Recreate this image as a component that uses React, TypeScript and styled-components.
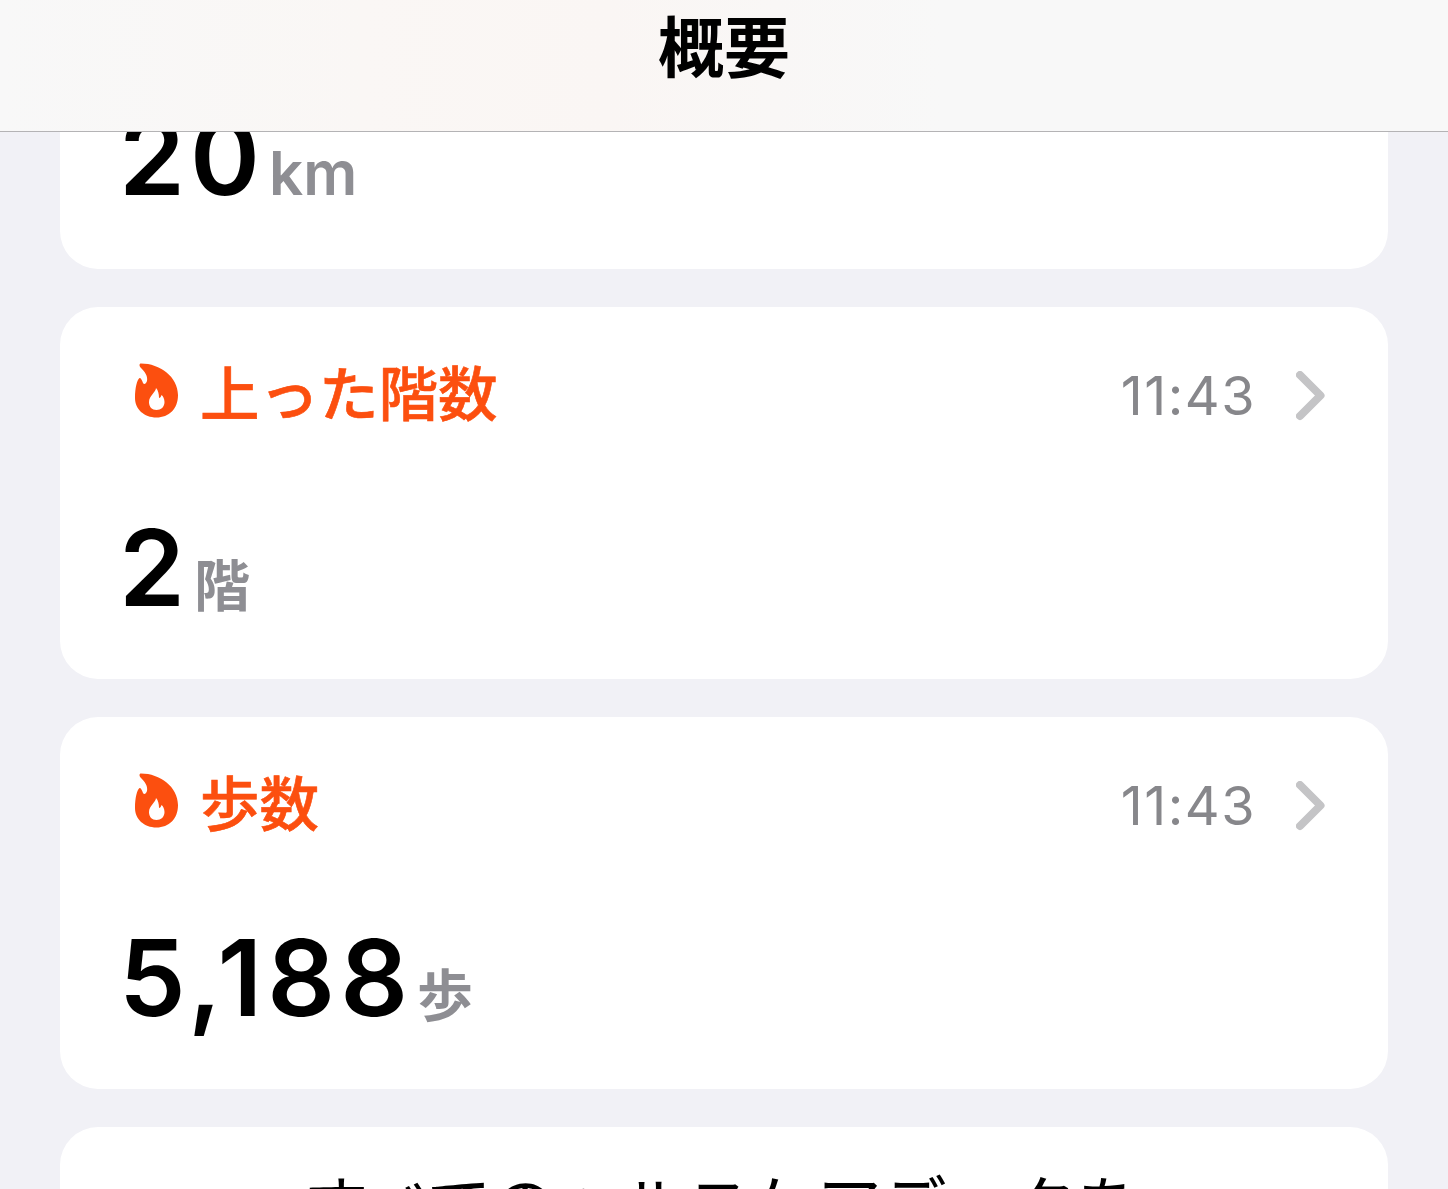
import React from "react";
import styled, { createGlobalStyle } from "styled-components";

const Global = createGlobalStyle`
  html, body { margin: 0; padding: 0; background: #f1f1f6; }
  body { font-family: Inter, "Noto Sans CJK JP", sans-serif; }
`;

const Screen = styled.div`
  width: 1448px;
  height: 1189px;
  overflow: hidden;
  display: flex;
  flex-direction: column;
  background: #f1f1f6;
`;

const Header = styled.header`
  flex: none;
  height: 131px;
  border-bottom: 1px solid #b4b3b5;
  background: linear-gradient(90deg, #f8f8f8 0%, #faf7f5 25%, #faf6f4 42%, #f8f8f8 65%, #f8f8f8 100%);
  display: flex;
  justify-content: center;
`;

const Title = styled.h1`
  margin: 0;
  height: 86px;
  font: 700 66px/86px "Noto Sans CJK JP", sans-serif;
  color: #000;
`;

const List = styled.main`
  display: flex;
  flex-direction: column;
  gap: 38px;
  padding: 0 60px;
`;

const Card = styled.section`
  height: 372px;
  box-sizing: border-box;
  background: #fff;
  border-radius: 38px;
  display: flex;
  flex-direction: column;
  padding: 0 62px 0 59px;
`;

const ClippedCard = styled(Card)`
  height: 137px;
  border-radius: 0 0 38px 38px;
  overflow: hidden;
  justify-content: flex-end;
  padding-bottom: 57px;
`;

const CardHead = styled.div`
  height: 206px;
  flex: none;
  display: flex;
  align-items: flex-start;
  padding-top: 50px;
  box-sizing: border-box;
`;

const Label = styled.div`
  display: flex;
  align-items: center;
  gap: 21px;
  margin-left: 16px;
  height: 66px;
  font: 500 59.500px/66px "Noto Sans CJK JP", sans-serif;
  -webkit-text-stroke: 0.6px #fc4f0f;
  color: #fc4f0f;
`;

const Meta = styled.div`
  margin-left: auto;
  display: flex;
  align-items: center;
  gap: 40px;
  height: 78px;
  font: 400 54px/78px Inter, sans-serif;
  letter-spacing: 1.500px;
  color: #87878b;
`;

const ValueRow = styled.div`
  display: flex;
  align-items: baseline;
  gap: 4px;
  line-height: 1;
`;

const Value = styled.span`
  font: 600 106px/110px Inter, sans-serif;
  letter-spacing: 5px;
  color: #000;
`;

const Unit = styled.span<{ $cjk?: boolean }>`
  font: ${(p) => (p.$cjk ? "700 56px/70px" : "600 60px/70px")} Inter, "Noto Sans CJK JP", sans-serif;
  color: #8e8e93;
`;

const FooterCard = styled(Card)`
  height: auto;
  flex: none;
  align-items: center;
  padding-top: 30px;
  padding-bottom: 40px;
`;

const FooterText = styled.div`
  font: 400 65px/90px "Noto Sans CJK JP", sans-serif;
  color: #000;
  white-space: nowrap;
`;

const Flame = () => (
  <svg width="44" height="56" viewBox="0 0 44 56" aria-hidden="true">
    <path
      fill="#fc4f0f"
      fillRule="evenodd"
      d="M6 1.500C4 1.500 4 4 6 6C10 10 13 14 12 19C11 22 9 23 8 21C7 18 6 16 4.500 16C2 18 0 26 0 36C0 47 9 55.500 21.500 55.500C34 55.500 43 47 43 33C43 15 25 1.500 6 1.500ZM21 26C21 30 14 34 14 40C14 45 17 48 21.500 48C26 48 29.500 45 29.500 40C29.500 37 28 34 26.500 33C26 35 25 36 24 36C24 32 23 28 21 26Z"
    />
  </svg>
);

const Chevron = () => (
  <svg width="30" height="50" viewBox="0 0 30 50" aria-hidden="true">
    <path d="M4 4L24.500 24.500L4 45" fill="none" stroke="#c4c4c6" strokeWidth="8" strokeLinecap="round" strokeLinejoin="round" />
  </svg>
);

type Metric = { label: string; time: string; value: string; unit: string };

const metrics: Metric[] = [
  { label: "上った階数", time: "11:43", value: "2", unit: "階" },
  { label: "歩数", time: "11:43", value: "5,188", unit: "歩" },
];

export default function App() {
  return (
    <Screen>
      <Global />
      <Header>
        <Title>概要</Title>
      </Header>
      <List>
        <ClippedCard>
          <ValueRow>
            <Value>20</Value>
            <Unit>km</Unit>
          </ValueRow>
        </ClippedCard>
        {metrics.map((m) => (
          <Card key={m.label}>
            <CardHead>
              <Label>
                <Flame />
                {m.label}
              </Label>
              <Meta>
                {m.time}
                <Chevron />
              </Meta>
            </CardHead>
            <ValueRow>
              <Value>{m.value}</Value>
              <Unit $cjk>{m.unit}</Unit>
            </ValueRow>
          </Card>
        ))}
        <FooterCard>
          <FooterText>すべてのヘルスケアデータを</FooterText>
        </FooterCard>
      </List>
    </Screen>
  );
}
